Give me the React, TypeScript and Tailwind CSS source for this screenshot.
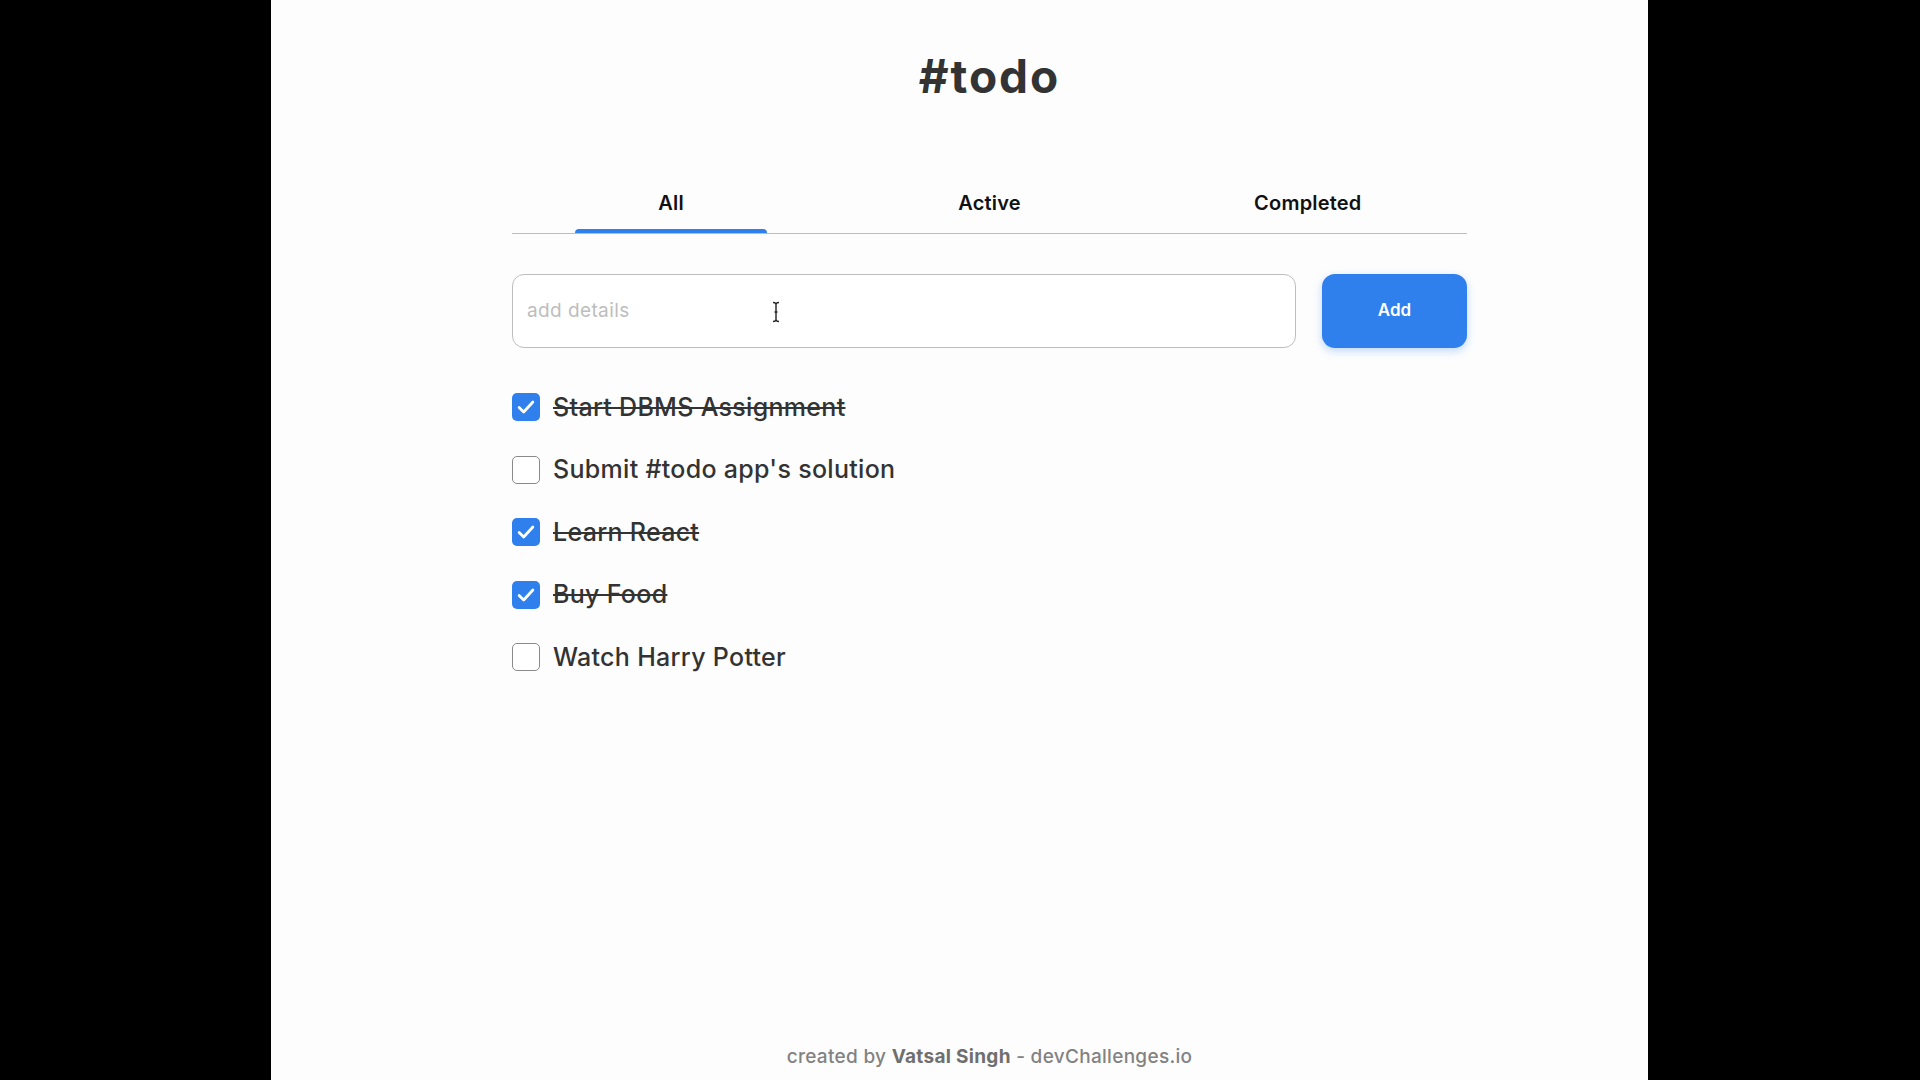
const todos = [
  { text: "Start DBMS Assignment", done: true },
  { text: "Submit #todo app's solution", done: false },
  { text: "Learn React", done: true },
  { text: "Buy Food", done: true },
  { text: "Watch Harry Potter", done: false },
];

const tabs = ["All", "Active", "Completed"];

function Checkbox({ checked }: { checked: boolean }) {
  if (checked) {
    return (
      <span className="flex h-[28px] w-[28px] shrink-0 items-center justify-center rounded-[5px] bg-[#2F80ED]">
        <svg width="22" height="22" viewBox="0 0 24 24" fill="none" stroke="white" strokeWidth="3" strokeLinecap="round" strokeLinejoin="round">
          <path d="M4.5 12.5l5 5L19.5 6.5" />
        </svg>
      </span>
    );
  }
  return <span className="h-[28px] w-[28px] shrink-0 rounded-[5px] border-[1.5px] border-[#8a8a8a] bg-white" />;
}

export default function App() {
  return (
    <div className="flex min-h-screen bg-black font-['Inter',sans-serif] text-[#333333]">
      <div className="ml-[271px] flex h-[1080px] w-[1377px] flex-col bg-[#fdfdfd]">
        <div className="ml-[241px] flex w-[955px] flex-1 flex-col">
          <h1 className="mt-[50px] h-[52px] text-center text-[46px] font-bold leading-[52px] tracking-[2px]">#todo</h1>

          <div className="mt-[69px] grid grid-cols-3 border-b border-[#bdbdbd]">
            {tabs.map((t, i) => (
              <div key={t} className="flex flex-col items-center">
                <span className="flex h-[58px] items-center pt-[5px] text-[20px] font-semibold tracking-[0.2px] text-[#111]">{t}</span>
                <span className={i === 0 ? "h-[4px] w-[192px] rounded-t-[4px] bg-[#2F80ED]" : "h-[4px] w-[192px]"} />
              </div>
            ))}
          </div>

          <div className="mt-[40px] flex h-[74px] gap-[26px]">
            <div className="relative flex w-[784px] items-center rounded-[12px] border border-[#bdbdbd] bg-white px-[14px]">
              <span className="text-[19px] tracking-[0.4px] text-[#bdbdbd]">add details</span>
              <svg className="absolute left-[258px] top-[26px]" width="10" height="22" viewBox="0 0 10 22" fill="none" stroke="#222" strokeWidth="1.4">
                <path d="M2 1.5c1.5 0 3 .5 3 2v15c0 1.5 1.5 2 3 2M8 1.5c-1.5 0-3 .5-3 2v15c0 1.5-1.5 2-3 2M3.5 11h3" />
              </svg>
            </div>
            <button className="flex w-[145px] items-center justify-center rounded-[13px] bg-[#2F80ED] text-[17px] font-semibold text-white shadow-[0_3px_8px_rgba(47,128,237,0.3)]">
              Add
            </button>
          </div>

          <ul className="mt-[28px] flex flex-col">
            {todos.map((t) => (
              <li key={t.text} className="flex h-[62.5px] items-center gap-[13px]">
                <Checkbox checked={t.done} />
                <span className={"text-[25px] font-medium tracking-[0.3px] " + (t.done ? "line-through decoration-[1.5px]" : "")}>{t.text}</span>
              </li>
            ))}
          </ul>

          <footer className="mb-[11px] mt-auto h-[24px] text-center text-[19px] font-medium leading-[24px] tracking-[0.3px] text-[#828282]">
            created by <span className="font-bold text-[#6f6f6f]">Vatsal Singh</span> - devChallenges.io
          </footer>
        </div>
      </div>
    </div>
  );
}
